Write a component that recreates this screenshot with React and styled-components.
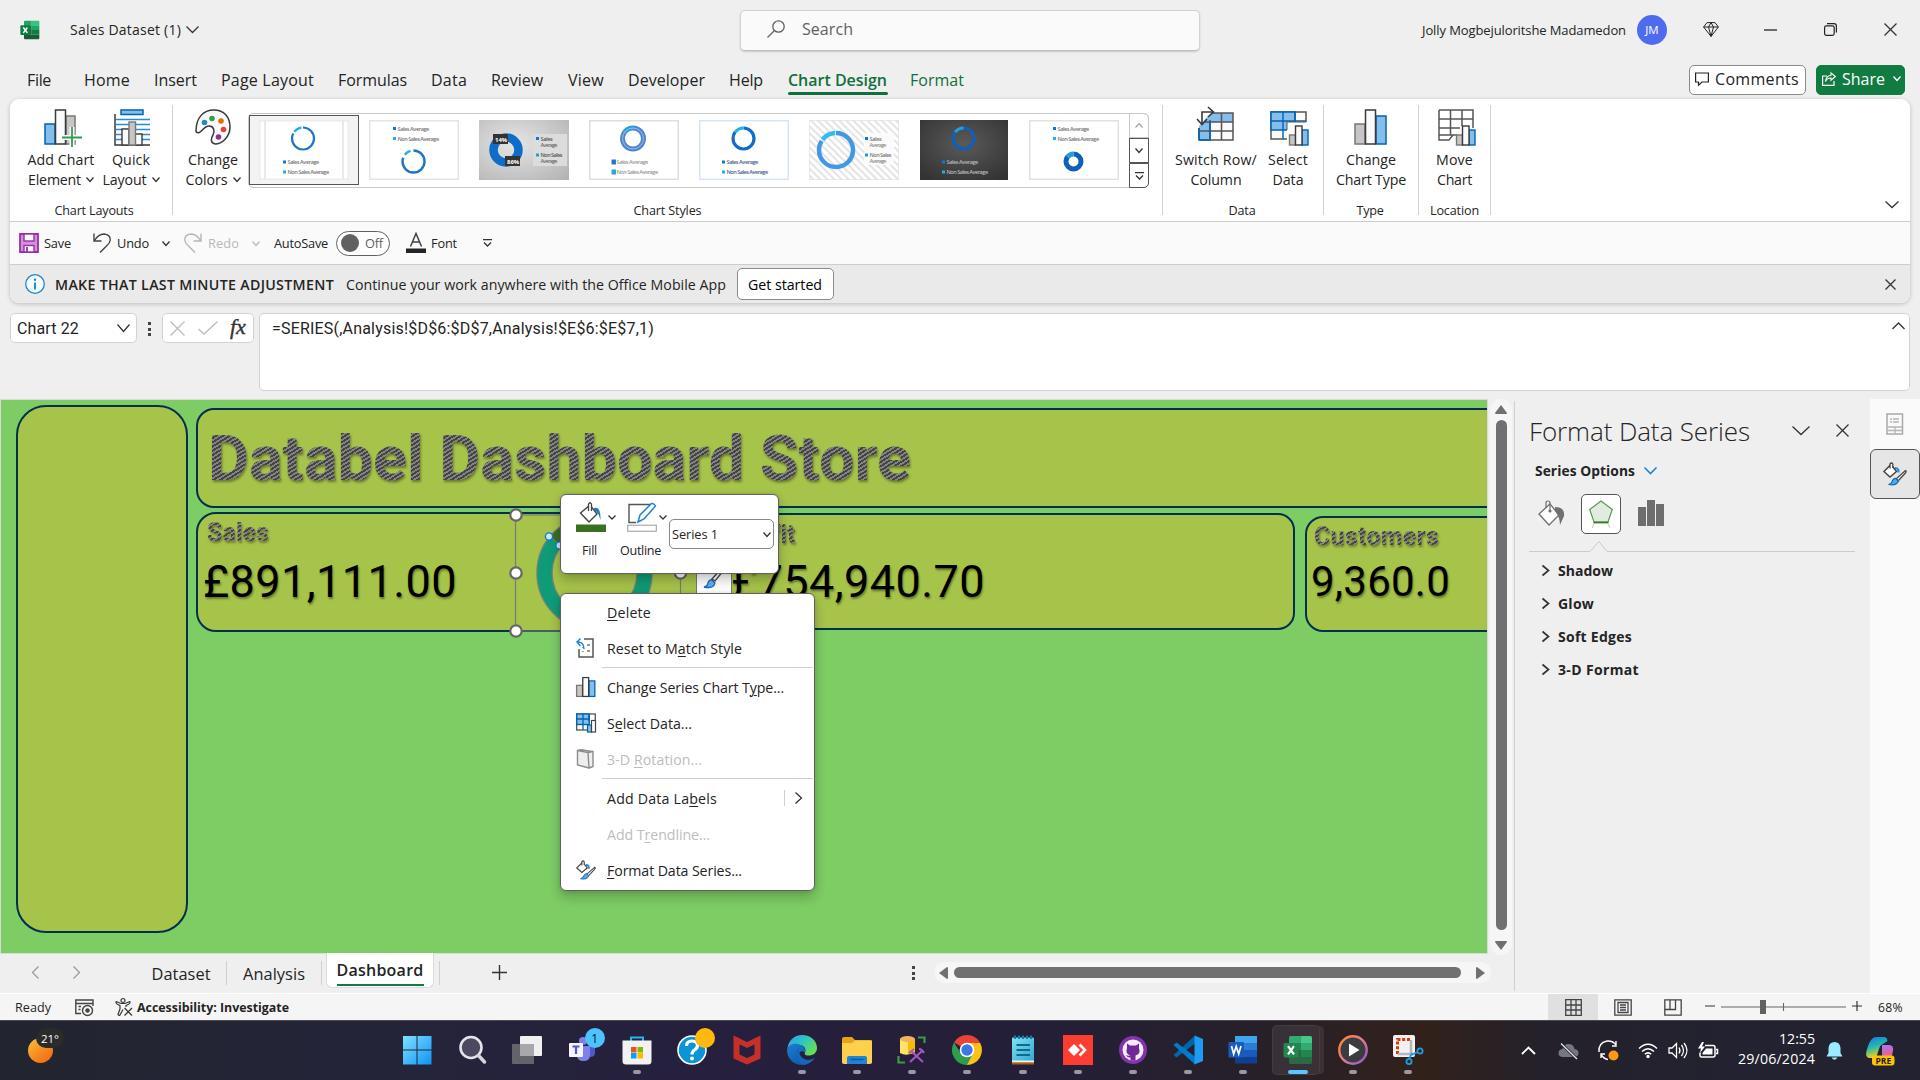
import React, { useLayoutEffect, useRef, useState } from "react";
import styled, { createGlobalStyle, css } from "styled-components";

const Global = createGlobalStyle`
  * { box-sizing: border-box; }
  html, body { margin: 0; padding: 0; overflow: hidden; }
  body { font-family: "Open Sans", "Noto Sans", sans-serif; color: #242424; }
`;

/* ---------- text ---------- */

const Run = styled.span`
  display: inline-block;
  flex: none;
  white-space: nowrap;
  font-family: ${(p) => p.$font || "inherit"};
  font-size: ${(p) => p.$size || 14}px;
  font-weight: ${(p) => p.$weight || 400};
  color: ${(p) => p.$color || "inherit"};
  margin-left: ${(p) => p.$ml || 0}px;
  u { text-decoration: underline; text-underline-offset: 2px; text-decoration-thickness: 1px; }
`;

/* Tracks a caption so that it fills the width reserved for it. */
function Text({ w, children, ...rest }) {
  const ref = useRef(null);
  const [tracking, setTracking] = useState(0);
  useLayoutEffect(() => {
    const el = ref.current;
    if (!w || !el) return;
    el.style.letterSpacing = "0px";
    const natural = el.getBoundingClientRect().width;
    setTracking((w - natural) / Math.max(1, el.textContent.length));
  }, [w]);
  return (
    <Run ref={ref} style={{ letterSpacing: `${tracking}px` }} {...rest}>
      {children}
    </Run>
  );
}

/* ---------- drawings ---------- */

const Svg = styled.svg`
  display: block;
  flex: none;
  width: ${(p) => p.$w}px;
  height: ${(p) => p.$h || p.$w}px;
  margin-left: ${(p) => p.$ml || 0}px;
  overflow: visible;
  fill: none;
`;

const Icon = ({ w, h, ml, children, ...r }) => (
  <Svg $w={w} $h={h || w} $ml={ml} viewBox={`0 0 ${w} ${h || w}`} {...r}>
    {children}
  </Svg>
);

const Chevron = ({ w = 8, h, c = "#333", s = 1.3, ml, dir = "down" }) => {
  const hh = h || w / 2;
  const d = {
    down: `M0.5 0.5 L${w / 2} ${hh - 0.5} L${w - 0.5} 0.5`,
    up: `M0.5 ${hh - 0.5} L${w / 2} 0.5 L${w - 0.5} ${hh - 0.5}`,
    right: `M0.5 0.5 L${w - 0.5} ${hh / 2} L0.5 ${hh - 0.5}`,
    left: `M${w - 0.5} 0.5 L0.5 ${hh / 2} L${w - 0.5} ${hh - 0.5}`,
  }[dir];
  return (
    <Icon w={w} h={hh} ml={ml}>
      <path d={d} stroke={c} strokeWidth={s} />
    </Icon>
  );
};

const Cross = ({ w = 12, c = "#333", ml, s = 1.3 }) => (
  <Icon w={w} ml={ml}>
    <path d={`M0.5 0.5 L${w - 0.5} ${w - 0.5} M${w - 0.5} 0.5 L0.5 ${w - 0.5}`} stroke={c} strokeWidth={s} />
  </Icon>
);

const ExcelLogo = ({ w }) => (
  <Svg $w={w} viewBox="0 0 30 30">
    <path d="M6 2.5 Q6 1 7.5 1 H17.5 V8 H6Z" fill="#21a366" />
    <path d="M17.5 1 H27.5 Q29 1 29 2.5 V8 H17.5Z" fill="#33c481" />
    <rect x="6" y="8" width="11.5" height="7" fill="#107c41" />
    <rect x="17.5" y="8" width="11.5" height="7" fill="#21a366" />
    <rect x="6" y="15" width="11.5" height="7" fill="#185c37" />
    <rect x="17.5" y="15" width="11.5" height="7" fill="#107c41" />
    <path d="M6 22 H29 V27 Q29 29 27.5 29 H7.5 Q6 29 6 27Z" fill="#185c37" />
    <rect x="0.5" y="8" width="15" height="14.5" rx="1.4" fill="#107c41" />
    <path d="M5 11.2 L11 19.3 M11 11.2 L5 19.3" stroke="#fff" strokeWidth="2.2" />
  </Svg>
);

const Bars = ({ a = "#c8c6c4", b = "#83beec", as = "#797774", bs = "#0063b1" }) => (
  <Icon w={34} h={36}>
    <rect x="1" y="15" width="10" height="20" fill={a} stroke={as} strokeWidth="1.5" />
    <rect x="22" y="7" width="10" height="28" fill={b} stroke={bs} strokeWidth="1.5" />
    <rect x="11.5" y="1" width="10" height="34" fill="#fafafa" stroke="#3a3a3a" strokeWidth="1.5" />
  </Icon>
);

const AddElementIcon = () => (
  <Icon w={38} h={38}>
    <rect x="1" y="15" width="10" height="20" fill="#83beec" stroke="#0063b1" strokeWidth="1.5" />
    <rect x="22" y="7" width="9" height="28" fill="#c8c6c4" stroke="#797774" strokeWidth="1.5" />
    <rect x="11.5" y="1" width="10" height="34" fill="#fafafa" stroke="#3a3a3a" strokeWidth="1.5" />
    <path d="M28 18 V38 M18 28.500 H38" stroke="#fff" strokeWidth="5" />
    <path d="M28 18 V38 M18 28.500 H38" stroke="#2f9e4f" strokeWidth="1.8" />
  </Icon>
);

const QuickLayoutIcon = () => (
  <Icon w={36} h={37}>
    <rect x="7" y="1" width="22" height="4.500" fill="#83beec" stroke="#0063b1" strokeWidth="1.5" />
    <path d="M2 10.500H36 M2 15.500H36 M2 20.500H36 M2 25.500H36 M2 30.500H36" stroke="#2b88d8" strokeWidth="1.5" />
    <path d="M1 5 V36 H36" stroke="#3a3a3a" strokeWidth="1.5" />
    <rect x="8" y="20" width="7" height="16" fill="#fafafa" stroke="#3a3a3a" strokeWidth="1.4" />
    <rect x="21" y="25" width="7" height="11" fill="#fafafa" stroke="#3a3a3a" strokeWidth="1.4" />
    <rect x="15" y="13" width="6.500" height="23" fill="#c8c6c4" stroke="#797774" strokeWidth="1.4" />
  </Icon>
);

const PaletteIcon = () => (
  <Icon w={36} h={36}>
    <path
      d="M1 22 C1 9 8 1 19 1 C29 1 35 8 35 18 C35 28 27 35 20 35 C15 34 16 29 18 26 C20 22 19 17 14 17 C9 17 6 24 3.500 23.800 C2 23.700 1 23 1 22Z"
      fill="#fafafa" stroke="#3a3a3a" strokeWidth="1.5"
    />
    <circle cx="9.500" cy="13.500" r="2.800" fill="#1e8bcd" />
    <circle cx="17" cy="9.500" r="2.800" fill="#2f9e4f" />
    <circle cx="26" cy="12" r="2.800" fill="#e07000" />
    <circle cx="28.500" cy="20.500" r="2.800" fill="#e8413c" />
    <circle cx="23.500" cy="28" r="2.800" fill="#8e2fa0" />
  </Icon>
);

const SwitchIcon = () => (
  <Icon w={37} h={37}>
    <path d="M12 7 H36 V34 H2 V20Z" fill="#fafafa" />
    <path d="M14 7 H36 V16 H13 V34 H2 V20Z" fill="#83beec" />
    <path d="M14 7 H36 V34 H2 V22 M2 25 H36 M8 16 H36 M13 14 V34 M24.500 7 V34" stroke="#555" strokeWidth="1.5" />
    <path d="M2 34 V22 M2 34 H13 V16" stroke="#0063b1" strokeWidth="1.5" />
    <path d="M5 18 V6 H16" stroke="#3a3a3a" strokeWidth="1.6" />
    <path d="M0 13 L5 18.500 L10 13 M11 1 L16.500 6 L11 11" stroke="#3a3a3a" strokeWidth="1.6" />
  </Icon>
);

const SelectDataIcon = ({ w = 39, h = 37 }) => (
  <Svg $w={w} $h={h} viewBox="0 0 39 37" preserveAspectRatio="none">
    <rect x="1" y="3" width="35" height="27" fill="#fafafa" stroke="#555" strokeWidth="1.5" />
    <rect x="1" y="3" width="24" height="18" fill="#83beec" stroke="#0063b1" strokeWidth="1.5" />
    <path d="M1 12 H36 M13 3 V30 M25 3 V30" stroke="#0063b1" strokeWidth="1.4" />
    <rect x="17" y="13" width="24" height="26" fill="#fff" />
    <path d="M17 21 V13 H36" stroke="#555" strokeWidth="1" />
    <rect x="19.500" y="26" width="6" height="10" fill="#c8c6c4" stroke="#797774" strokeWidth="1.4" />
    <rect x="32" y="21" width="6" height="15" fill="#83beec" stroke="#0063b1" strokeWidth="1.4" />
    <rect x="25.500" y="17" width="6.500" height="19" fill="#fafafa" stroke="#3a3a3a" strokeWidth="1.4" />
  </Svg>
);

const MoveChartIcon = () => (
  <Icon w={38} h={37}>
    <path d="M1 1 H35 V19 M1 1 V31 H11 L15 26 H19 M1 26 H15 M1 10 H35 M1 19 H22 M12.500 1 V26 M24 1 V17" stroke="#555" strokeWidth="1.5" />
    <rect x="18.500" y="26" width="6" height="10" fill="#c8c6c4" stroke="#797774" strokeWidth="1.4" />
    <rect x="31" y="21" width="6" height="15" fill="#83beec" stroke="#0063b1" strokeWidth="1.4" />
    <rect x="24.500" y="17" width="6.500" height="19" fill="#fafafa" stroke="#3a3a3a" strokeWidth="1.4" />
  </Icon>
);

const BucketBrush = ({ w = 22, ml }) => (
  <Svg $w={w} $ml={ml} viewBox="0 0 24 24">
    <path d="M1 9.500 L8 2.500 L13.500 9.500 L7 15Z" fill="#fff" stroke="#444" strokeWidth="1.5" />
    <path d="M7 6.500 V2 Q8.500 0 9.800 2 V6" fill="#fff" stroke="#444" strokeWidth="1.3" />
    <path d="M12 6 Q16 6 15.500 10.500" stroke="#2b88d8" strokeWidth="2.2" />
    <path d="M22.500 8.500 Q24 9.500 22 11.500 L15 19 L13 17Z" fill="#fff" stroke="#444" strokeWidth="1.3" />
    <path d="M13 16.500 L15.500 19 Q13.500 24 5.500 22.500 Q9 21.500 9.500 18.500 Q11 16 13 16.500Z" fill="#5aa7e0" stroke="#0f6cbd" strokeWidth="1.2" />
  </Svg>
);

/* ---------- frame ---------- */

const Screen = styled.div`
  width: 1920px;
  height: 1080px;
  display: flex;
  flex-direction: column;
  background: #efefef;
  overflow: hidden;
`;
const Defs = styled.svg`
  position: absolute;
  width: 0;
  height: 0;
`;

const TitleBar = styled.header`
  height: 61px;
  display: flex;
  align-items: flex-start;
`;
const TitlePart = styled.div`
  display: flex;
  align-items: center;
  height: 59px;
  width: ${(p) => p.$w}px;
  padding-left: ${(p) => p.$pl || 0}px;
`;
const SearchField = styled.div`
  width: 460px;
  height: 41px;
  margin-top: 10px;
  display: flex;
  align-items: center;
  padding: 0 0 4px 26px;
  background: #fafafa;
  border: 1px solid #d2d2d2;
  border-bottom-color: #bdbdbd;
  border-radius: 5px;
  box-shadow: 0 1px 2px rgba(0, 0, 0, 0.16);
`;
const Avatar = styled.div`
  flex: none;
  width: 30px;
  height: 30px;
  margin-left: 11px;
  border-radius: 50%;
  background: #4f6bed;
  display: grid;
  place-items: center;
`;

const TabStrip = styled.nav`
  height: 38px;
  display: flex;
  align-items: center;
  padding-left: 27px;
`;
const RibbonTab = styled.div`
  position: relative;
  height: 38px;
  display: flex;
  align-items: center;
  padding-bottom: 1px;
  margin-right: ${(p) => p.$mr ?? 24}px;
  color: ${(p) => (p.$green ? "#0f703b" : "#242424")};
  ${(p) =>
    p.$active &&
    css`
      &::after {
        content: "";
        position: absolute;
        left: 0;
        right: -1px;
        bottom: 4px;
        height: 3px;
        border-radius: 2px;
        background: #0f703b;
      }
    `}
`;
const TabButton = styled.button`
  font-family: inherit;
  flex: none;
  width: ${(p) => p.$w}px;
  height: 30px;
  display: flex;
  align-items: center;
  padding: 0 0 3px 5px;
  border-radius: 5px;
  border: 1px solid ${(p) => (p.$primary ? "#107c41" : "#8a8a8a")};
  background: ${(p) => (p.$primary ? "#107c41" : "#fff")};
  color: ${(p) => (p.$primary ? "#fff" : "#242424")};
  margin-left: ${(p) => p.$ml}px;
`;

/* ---------- ribbon ---------- */

const RibbonCard = styled.section`
  flex: none;
  height: 204px;
  margin: 0 10px;
  display: flex;
  flex-direction: column;
  border-radius: 9px;
  background: #fff;
  box-shadow: 0 1px 4px rgba(0, 0, 0, 0.22);
`;
const Ribbon = styled.div`
  height: 123px;
  display: flex;
  border-bottom: 1px solid #cdcdcd;
`;
const Group = styled.div`
  flex: none;
  width: ${(p) => p.$w}px;
  display: flex;
  flex-direction: column;
`;
const GroupTools = styled.div`
  height: 101px;
  display: flex;
`;
const GroupCaption = styled.div`
  height: 20px;
  display: flex;
  align-items: center;
  justify-content: center;
  margin-left: ${(p) => p.$shift || 0}px;
`;
const Divider = styled.div`
  flex: none;
  width: 1px;
  height: 110px;
  margin-top: 6px;
  background: #d0d0d0;
`;
const Tool = styled.div`
  flex: none;
  width: ${(p) => p.$w}px;
  margin-left: ${(p) => p.$ml || 0}px;
  padding-top: ${(p) => p.$top || 10}px;
  display: flex;
  flex-direction: column;
  align-items: center;
`;
const ToolIcon = styled.div`
  height: ${(p) => 50 - (p.$top || 10)}px;
  transform: translateX(${(p) => p.$dx || 0}px);
`;
const ToolLine = styled.div`
  height: 20px;
  display: flex;
  align-items: center;
`;

const Gallery = styled.div`
  flex: none;
  width: 901px;
  height: 75px;
  margin: 14px 0 0 4px;
  display: flex;
  border: 1px solid #c8c8c8;
  border-radius: 5px;
`;
const Styles = styled.div`
  flex: 1;
  display: flex;
`;
const StyleCell = styled.div`
  width: 110px;
  height: 70px;
  margin-top: 1px;
  display: grid;
  place-items: center;
  border: 1px solid ${(p) => (p.$selected ? "#555" : "transparent")};
  background: ${(p) => (p.$selected ? "#f3f3f3" : "transparent")};
`;
const Thumb = styled.svg`
  display: block;
  width: 90px;
  height: 60px;
`;
const GallerySteps = styled.div`
  width: 20px;
  margin: -1px -1px -1px 0;
  display: flex;
  flex-direction: column;
`;
const Step = styled.div`
  flex: 1;
  display: grid;
  place-items: center;
  align-content: center;
  border: 1px solid ${(p) => (p.$dim ? "#c8c8c8" : "#555")};
  border-radius: ${(p) => p.$r || 0};
`;
const Collapse = styled.div`
  flex: 1;
  display: flex;
  justify-content: flex-end;
  align-items: flex-end;
  padding: 0 11px 13px 0;
`;

function Legend({ x, y, text, color = "#777", dot = "#0f78d4" }) {
  return (
    <g>
      <rect x={x} y={y - 3.5} width="3" height="3" fill={dot} />
      <text x={x + 4.5} y={y} fontSize="5.600" fontFamily="Open Sans" fontWeight="600" fill={color} textLength={text.length * 2.45}>
        {text}
      </text>
    </g>
  );
}
function Ring({ x, y, r, s, c = "#1f74c9", c2 = "#1fb0e8", gap = 0.06 }) {
  const len = 2 * Math.PI * r;
  return (
    <g transform={`rotate(-90 ${x} ${y})`}>
      <circle cx={x} cy={y} r={r} stroke={c} strokeWidth={s} fill="none" strokeDasharray={`${len * (0.85 - gap / 2)} ${len}`} />
      <circle cx={x} cy={y} r={r} stroke={c2} strokeWidth={s} fill="none" strokeDasharray={`${len * (0.15 - gap / 2)} ${len}`} strokeDashoffset={-len * 0.85} />
    </g>
  );
}
const SA = "Sales Average";
const NSA = "Non Sales Average";
const frame = (stroke, fill = "#fff") => <rect x="0.75" y="0.75" width="88.500" height="58.500" fill={fill} stroke={stroke} strokeWidth="1.5" />;
const thumbs = [
  <>
    <rect width="90" height="60" fill="#fff" />
    <path d="M6 0V60 M84 0V60" stroke="#e2e2e2" strokeWidth="1.5" />
    {frame("#ececec", "none")}
    <Ring x={44} y={18.5} r={11} s={2.2} />
    <Legend x={24} y={44} text={SA} />
    <Legend x={24} y={54} text={NSA} dot="#1fb0e8" />
  </>,
  <>
    {frame("#e4e4e4")}
    <Legend x={24} y={10.5} text={SA} />
    <Legend x={24} y={20.5} text={NSA} dot="#1fb0e8" />
    <Ring x={44.5} y={41.5} r={11} s={2.4} gap={0.1} />
  </>,
  <>
    <rect width="90" height="60" fill="url(#silver)" />
    <rect x="54" y="14" width="34" height="32" fill="#dcdcdc" />
    <Ring x={27} y={30} r={12.5} s={8.5} c="#0f6cc8" c2="#0f6cc8" gap={0} />
    <rect x="14" y="14" width="15" height="10" fill="#333" />
    <rect x="26" y="36" width="15" height="10" fill="#333" />
    <text x="16" y="21.500" fontSize="6" fontWeight="700" fill="#fff" fontFamily="Open Sans">14%</text>
    <text x="28" y="43.500" fontSize="6" fontWeight="700" fill="#fff" fontFamily="Open Sans">86%</text>
    <Legend x={57} y={20.5} text="Sales" color="#555" />
    <text x="61.500" y="26.500" fontSize="5.600" fill="#555" fontFamily="Open Sans" textLength="17">Average</text>
    <Legend x={57} y={37} text="Non Sales" color="#555" dot="#1fa0d8" />
    <text x="61.500" y="43" fontSize="5.600" fill="#555" fontFamily="Open Sans" textLength="17">Average</text>
  </>,
  <>
    {frame("#dedede")}
    <Ring x={44} y={18.5} r={10.5} s={5} c="#4f86cf" c2="#2d9fd4" gap={0} />
    <circle cx="44" cy="18.500" r="10.500" stroke="#a9c8ec" strokeWidth="0.8" />
    <rect x="22.500" y="39.500" width="4.500" height="5" fill="#3d78c8" />
    <rect x="22.500" y="49.500" width="4.500" height="5" fill="#2d9fd4" />
    <Legend x={23} y={44} text={SA} color="#999" />
    <Legend x={23} y={54} text={NSA} color="#999" dot="#1fb0e8" />
  </>,
  <>
    {frame("#d5e6f7")}
    <Ring x={44.5} y={18.5} r={10.5} s={3.2} c="#0f6cc8" c2="#1fb0e8" gap={0} />
    <Legend x={23} y={44} text={SA} color="#44618c" />
    <Legend x={23} y={54} text={NSA} color="#44618c" dot="#1fb0e8" />
  </>,
  <>
    <rect width="90" height="60" fill="url(#hatch)" stroke="#e3e3e3" strokeWidth="1.5" />
    <rect x="55" y="13" width="30" height="32" fill="#fbfbfb" />
    <Ring x={27} y={30} r={17} s={4.5} c="#4398e6" c2="#2fbdf0" gap={0.03} />
    <Legend x={56} y={20.5} text="Sales" color="#777" />
    <text x="60.500" y="26.500" fontSize="5.600" fill="#777" fontFamily="Open Sans" textLength="17">Average</text>
    <Legend x={56} y={37} text="Non Sales" color="#777" dot="#1fa0d8" />
    <text x="60.500" y="43" fontSize="5.600" fill="#777" fontFamily="Open Sans" textLength="17">Average</text>
  </>,
  <>
    <rect x="1" width="88" height="60" fill="url(#dark)" />
    <Ring x={44.5} y={18.5} r={10.5} s={3.2} c="#1060b8" c2="#1fa0e0" gap={0} />
    <Legend x={23} y={44} text={SA} color="#b8b8b8" />
    <Legend x={23} y={54} text={NSA} color="#b8b8b8" dot="#1fb0e8" />
  </>,
  <>
    {frame("#e2e2e2")}
    <Legend x={24} y={10.5} text={SA} />
    <Legend x={24} y={20.5} text={NSA} dot="#1fb0e8" />
    <Ring x={44.5} y={41.5} r={7.5} s={5} c="#1060b8" c2="#1fa0d0" gap={0} />
  </>,
];

/* ---------- quick access, message, formula ---------- */

const QuickAccess = styled.div`
  height: 43px;
  display: flex;
  align-items: center;
  padding-left: 9px;
  background: #fafafa;
  border-bottom: 1px solid #cdcdcd;
`;
const Toggle = styled.div`
  flex: none;
  width: 54px;
  height: 25px;
  margin-left: 8px;
  padding-left: 4px;
  display: flex;
  align-items: center;
  border: 1px solid #616161;
  border-radius: 13px;
  background: #fff;
  &::before {
    content: "";
    width: 18px;
    height: 18px;
    border-radius: 50%;
    background: #616161;
  }
`;
const MessageBar = styled.div`
  height: 38px;
  display: flex;
  align-items: center;
  padding: 0 14px 0 15px;
  background: #eaeaea;
  border-radius: 0 0 9px 9px;
`;
const MessageButton = styled.button`
  font-family: inherit;
  width: 97px;
  height: 32px;
  margin-left: 11px;
  padding: 0 0 0 10px;
  text-align: left;
  border: 1px solid #8a8a8a;
  border-radius: 5px;
  background: #fff;
`;
const Push = styled.div`
  flex: 1;
`;

const FormulaRow = styled.div`
  flex: none;
  height: 96px;
  padding: 10px 10px 0;
  display: flex;
  align-items: flex-start;
`;
const InputBox = styled.div`
  flex: none;
  width: ${(p) => p.$w}px;
  height: ${(p) => p.$h || 30}px;
  margin-left: ${(p) => p.$ml || 0}px;
  padding: ${(p) => p.$pad || "0 6px"};
  display: flex;
  align-items: ${(p) => (p.$h ? "flex-start" : "center")};
  background: #fff;
  border: 1px solid #d2d2d2;
  border-radius: 5px;
`;
const Fx = styled.span`
  font: italic 400 22px/22px "Liberation Serif", serif;
  -webkit-text-stroke: 0.4px #333;
  color: #333;
  margin: -2px 0 0 12px;
`;
const Dots = styled.div`
  width: 3px;
  height: 14px;
  margin-left: ${(p) => p.$ml}px;
  margin-top: ${(p) => p.$mt || 0}px;
  background: repeating-linear-gradient(#444 0 3px, transparent 3px 5.5px);
`;

/* ---------- workbook ---------- */

const Main = styled.main`
  flex: none;
  height: 594px;
  display: flex;
`;
const Workbook = styled.div`
  width: 1514px;
  display: flex;
  flex-direction: column;
`;
const SheetRow = styled.div`
  height: 554px;
  display: flex;
`;
const Sheet = styled.div`
  position: relative;
  width: 1488px;
  height: 555px;
  background: #7dcc64;
  border: 1px solid #dadada;
  overflow: hidden;
`;
const Shape = styled.div`
  position: absolute;
  left: ${(p) => p.$x}px;
  top: ${(p) => p.$y}px;
  width: ${(p) => p.$w}px;
  height: ${(p) => p.$h}px;
  border: 2px solid #032f50;
  border-radius: ${(p) => p.$r}px;
  background: #a6c34a;
`;
const ShapeText = styled.div`
  position: absolute;
  left: ${(p) => p.$x}px;
  top: ${(p) => p.$y}px;
  line-height: 1;
  white-space: nowrap;
`;
const Hatched = styled(ShapeText)`
  filter: drop-shadow(1px 2px 1px rgba(50, 50, 20, 0.5));
  span {
    color: transparent;
    background: repeating-linear-gradient(148deg, #444 0 1.9px, #848484 1.9px 3.6px);
    background-clip: text;
    -webkit-background-clip: text;
  }
`;
const Amount = styled(ShapeText)`
  color: #000;
  text-shadow: 1px 2px 2px rgba(30, 40, 0, 0.45);
`;
const ChartObject = styled.svg`
  position: absolute;
  left: 500px;
  top: 100px;
  width: 200px;
  height: 150px;
`;
const StyleFlyout = styled.div`
  position: absolute;
  left: 695px;
  top: 162px;
  width: 36px;
  height: 36px;
  background: #fff;
  border: 1px solid #777;
  display: grid;
  place-items: center;
`;

const floating = css`
  position: absolute;
  background: #fff;
  border: 1px solid #616161;
  border-radius: 6px;
  box-shadow: 0 6px 12px rgba(0, 0, 0, 0.22), 0 0 4px rgba(0, 0, 0, 0.12);
`;
const MiniToolbar = styled.div`
  ${floating}
  left: 559px;
  top: 94px;
  width: 219px;
  height: 80px;
  display: flex;
  padding-left: 15px;
`;
const MiniTool = styled.div`
  display: flex;
  flex-direction: column;
  width: ${(p) => p.$w}px;
  padding-top: 7px;
`;
const MiniTop = styled.div`
  height: 33px;
  display: flex;
`;
const MiniLabel = styled.div`
  height: 30px;
  display: flex;
  align-items: center;
  padding-left: ${(p) => p.$pl || 0}px;
`;
const SeriesSelect = styled.div`
  width: 105px;
  height: 30px;
  margin-top: 24px;
  padding: 0 2px;
  display: flex;
  align-items: center;
  justify-content: space-between;
  border: 1px solid #8a8a8a;
  border-radius: 5px;
`;
const ContextMenu = styled.div`
  ${floating}
  left: 559px;
  top: 193px;
  width: 255px;
  height: 298px;
  padding: 0 0 4px;
`;
const MenuItem = styled.div`
  height: 36px;
  display: flex;
  align-items: center;
  padding-right: ${(p) => p.$pr || 0}px;
  color: ${(p) => (p.$dim ? "#bdbdbd" : "#242424")};
`;
const MenuIcon = styled.div`
  width: 31px;
  margin-left: 15px;
  height: 22px;
  display: flex;
  align-items: center;
`;
const MenuRule = styled.div`
  height: 1px;
  margin: 1px 1px 1px 41px;
  background: #cfcfcf;
`;
const SubDivider = styled.div`
  width: 1px;
  height: 16px;
  margin-left: auto;
  background: #cfcfcf;
`;

const VScroll = styled.div`
  width: 22px;
  height: 556px;
  margin: 0 0 -2px 2px;
  padding: 6px 0 5px;
  border-radius: 11px;
  background: #f6f6f6;
  display: flex;
  flex-direction: column;
  align-items: center;
`;
const VThumb = styled.div`
  width: 11px;
  height: 510px;
  margin: 6px 0 11px;
  border-radius: 6px;
  background: #707070;
`;
const SheetTabs = styled.div`
  height: 40px;
  display: flex;
  align-items: flex-start;
`;
const SheetTab = styled.div`
  position: relative;
  height: ${(p) => (p.$active ? 35 : 40)}px;
  display: flex;
  align-items: center;
  justify-content: center;
  width: ${(p) => p.$w}px;
  margin-left: ${(p) => p.$ml || 0}px;
  ${(p) =>
    p.$active &&
    css`
      background: #fff;
      border: 1px solid #dcdcdc;
      border-top: 0;
      border-radius: 0 0 6px 6px;
      span {
        margin-top: 2px;
        border-bottom: 2px solid #107c41;
        line-height: 27px;
      }
    `}
`;
const TabDivider = styled.div`
  width: 1px;
  height: 24px;
  margin: 8px 0 0 ${(p) => p.$ml || 0}px;
  background: #cfcfcf;
`;
const NavCell = styled.div`
  height: 38px;
  display: flex;
  align-items: center;
  padding-left: ${(p) => p.$pl || 0}px;
  width: ${(p) => p.$w}px;
`;
const HScroll = styled.div`
  width: 557px;
  height: 21px;
  margin: 9px 0 0 19px;
  padding: 0 6px 0 5px;
  display: flex;
  align-items: center;
  border-radius: 11px;
  background: #f6f6f6;
`;
const HThumb = styled.div`
  width: 507px;
  height: 11px;
  margin: 0 15px 0 6px;
  border-radius: 6px;
  background: #707070;
`;

/* ---------- format pane ---------- */

const Pane = styled.aside`
  width: 356px;
  height: 590px;
  margin-top: 2px;
  border-left: 1px solid #cfcfcf;
  display: flex;
  flex-direction: column;
`;
const PaneTitle = styled.div`
  height: 60px;
  display: flex;
  align-items: center;
  padding-left: 14px;
  padding-bottom: 1px;
`;
const PaneHeading = styled.div`
  height: 18px;
  display: flex;
  align-items: center;
  padding-left: 20px;
`;
const PaneIcons = styled.div`
  height: 55px;
  display: flex;
  align-items: flex-end;
  padding-left: 23px;
`;
const PaneTab = styled.div`
  width: 40px;
  height: 40px;
  margin: 0 17px 0 16px;
  border: 1px solid #555;
  border-radius: 5px;
  background: #fff;
  display: grid;
  place-items: center;
`;
const PaneRow = styled.div`
  height: 33px;
  display: flex;
  align-items: center;
  padding-left: 27px;
`;
const PaneStrip = styled.div`
  width: 50px;
  height: 594px;
  padding-top: 14px;
  background: #fafafa;
  display: flex;
  flex-direction: column;
  align-items: center;
`;
const StripActive = styled.div`
  width: 50px;
  height: 50px;
  margin-top: 14px;
  border: 1px solid #555;
  border-radius: 6px;
  background: #e6e6e6;
  display: grid;
  place-items: center;
`;

/* ---------- status bar ---------- */

const StatusBar = styled.footer`
  flex: none;
  height: 27px;
  display: flex;
  align-items: center;
  padding: 1px 17px 1px 15px;
  background: #f5f5f5;
  border-top: 1px solid #fff;
`;
const ViewButton = styled.div`
  width: 50px;
  height: 27px;
  margin: -2px 0;
  display: grid;
  place-items: center;
  background: ${(p) => (p.$active ? "#e0e0e0" : "transparent")};
`;

/* ---------- taskbar ---------- */

const Taskbar = styled.div`
  flex: none;
  height: 60px;
  display: flex;
  border-top: 1px solid #4a4a50;
  background: linear-gradient(90deg, #22252f 0%, #24243a 22%, #261f3d 38%, #241f38 54%, #272029 66%, #32211b 74%, #25212a 80%, #222230 90%, #222231 100%);
`;
const Weather = styled.div`
  position: relative;
  width: 28px;
  height: 25px;
  margin: 17px 0 0 28px;
  &::before {
    content: "";
    display: block;
    width: 25px;
    height: 25px;
    border-radius: 50%;
    background: linear-gradient(140deg, #f8c13a, #f58a1f 55%, #f0650f);
  }
`;
const WeatherBadge = styled.div`
  position: absolute;
  left: 8px;
  top: -10px;
  height: 20px;
  width: 28px;
  border-radius: 10px;
  background: #2b2b2b;
  color: #fff;
  display: grid;
  place-items: center;
`;
const Apps = styled.div`
  display: flex;
  margin-left: 333.5px;
`;
const AppSlot = styled.div`
  position: relative;
  width: 55.06px;
  height: 59px;
  padding-top: 14px;
  display: flex;
  flex-direction: column;
  align-items: center;
  &::after {
    content: "";
    width: ${(p) => (p.$state === "active" ? 20 : 8)}px;
    height: 4px;
    margin-top: 5px;
    border-radius: 2px;
    background: ${(p) => (p.$state === "active" ? "#4cc2ff" : p.$state === "open" ? "#9a98a2" : "transparent")};
  }
  &::before {
    content: "";
    position: absolute;
    inset: 4px 5px 5px 2px;
    border-radius: 5px;
    background: rgba(255, 255, 255, ${(p) => (p.$state === "active" ? 0.08 : 0)});
    box-shadow: ${(p) => (p.$state === "active" ? "5px 0 0 -1px rgba(255,255,255,0.08), inset 0 0 0 1px rgba(255,255,255,0.06)" : "none")};
  }
`;
const CountBadge = styled.div`
  position: absolute;
  top: 7px;
  right: 5px;
  width: 20px;
  height: 20px;
  border-radius: 50%;
  background: ${(p) => p.$c};
  color: #111;
  display: grid;
  place-items: center;
`;
const Tray = styled.div`
  display: flex;
  align-items: center;
  margin-left: auto;
  padding-right: 25px;
`;
const Clock = styled.div`
  width: 97px;
  margin-top: -3px;
  display: flex;
  flex-direction: column;
  align-items: flex-end;
  line-height: 20px;
  color: #fff;
`;

const apps = [
  { id: "start", art: (
    <Icon w={30}>
      <defs><linearGradient id="win" x1="0" y1="0" x2="1" y2="1"><stop stopColor="#7fe0ff" /><stop offset="1" stopColor="#0f93f5" /></linearGradient></defs>
      <path d="M1 1H14.500V14.500H1Z M15.500 1H29.500V14.500H15.500Z M1 15.500H14.500V29.500H1Z M15.500 15.500H29.500V29.500H15.500Z" fill="url(#win)" />
    </Icon>) },
  { id: "search", art: (
    <Icon w={30}>
      <circle cx="14" cy="12.500" r="10.500" fill="#4c4860" stroke="#e4e4ea" strokeWidth="2.600" />
      <path d="M21.500 20.500 L27.500 27" stroke="#d5d5dc" strokeWidth="3.500" strokeLinecap="round" />
    </Icon>) },
  { id: "views", art: (
    <Icon w={30}>
      <rect x="8" y="1" width="22" height="20" rx="1" fill="#f0f0f0" />
      <rect x="0" y="9" width="22" height="20" rx="1" fill="#63636a" />
      <rect x="8" y="9" width="14" height="12" fill="#a8a8ac" />
    </Icon>) },
  { id: "teams", badge: "1", art: (
    <Icon w={30}>
      <circle cx="16" cy="6" r="4" fill="#7b83eb" />
      <path d="M10 11H23V20Q23 26 16.500 26Q10 26 10 20Z" fill="#7b83eb" />
      <path d="M23 11H28V18Q28 22 23 22Z" fill="#5059c9" />
      <rect x="2" y="8" width="14" height="14" rx="1" fill="#f4f5ff" />
      <path d="M5.500 11.500H12.500 M9 11.500V19" stroke="#5059c9" strokeWidth="2.200" />
    </Icon>) },
  { id: "store", state: "open", art: (
    <Icon w={30}>
      <path d="M9 6V2.500H21V6" stroke="#27b4f0" strokeWidth="2" />
      <path d="M0.500 5.500H29.500V26Q29.500 29.500 26 29.500H4Q0.500 29.500 0.500 26Z" fill="#f2f2f2" />
      <rect x="9" y="12" width="5.500" height="5.500" fill="#f25022" /><rect x="15.500" y="12" width="5.500" height="5.500" fill="#7fba00" />
      <rect x="9" y="18" width="5.500" height="5.500" fill="#00a4ef" /><rect x="15.500" y="18" width="5.500" height="5.500" fill="#ffb900" />
    </Icon>) },
  { id: "assist", dot: true, art: (
    <Icon w={30}>
      <circle cx="15" cy="15" r="14" fill="#0a95d8" stroke="#fff" strokeWidth="1.600" />
      <path d="M9.500 11Q9.500 6 15 6Q20.500 6 20.500 10.500Q20.500 13 17.500 15Q15 16.500 15 19.500" stroke="#fff" strokeWidth="3.200" />
      <circle cx="15" cy="23.500" r="2" fill="#fff" />
    </Icon>) },
  { id: "shield", art: (
    <Icon w={30}>
      <path d="M1.500 0.500L15 7L28.500 0.500V23.500L15 29.500L1.500 23.500Z M7.500 9.500V19.500L15 23L22.500 19.500V9.500L15 13Z" fill="#c6302b" fillRule="evenodd" />
    </Icon>) },
  { id: "edge", state: "open", art: (
    <Icon w={30}>
      <defs>
        <linearGradient id="eg" x1="0" y1="0" x2="1" y2="0.600"><stop stopColor="#2f9fe8" /><stop offset="0.5" stopColor="#2cc3c9" /><stop offset="1" stopColor="#66df54" /></linearGradient>
        <linearGradient id="eb" x1="0" y1="0" x2="0.600" y2="1"><stop stopColor="#1b7fd0" /><stop offset="1" stopColor="#0c59a4" /></linearGradient>
      </defs>
      <path d="M0.500 14C1 6 7 0 15 0C24 0 30 6 30 13C30 18 26 20.500 21.500 20.500C18 20.500 17 19 18 17.500C19.500 14 17 10 12.500 10C7 10 1 13 0.500 14Z" fill="url(#eg)" />
      <path d="M0 15C1 9.500 7 8 11 9C16 10 19 14 18 17.500C14 14 10 19 12 23C15 27 22 26.500 27 23.500C25 27 20.500 30 15 30C6.500 30 0 23.500 0 15Z" fill="url(#eb)" />
      <path d="M12 13C7 17 8 27 17 29.800C22 29 26 26 27.500 23C20 27.500 11 23.500 12 13Z" fill="#1467bd" />
    </Icon>) },
  { id: "files", state: "open", art: (
    <Icon w={30}>
      <path d="M0 4Q0 2 2 2H10L13 5H28Q30 5 30 7V28H0Z" fill="#e8a317" />
      <path d="M0 8H10L13 5.500H30V27Q30 29 28 29H2Q0 29 0 27Z" fill="#ffd04c" />
      <path d="M5 29V23Q5 21 7 21H23Q25 21 25 23V29Z" fill="#1f84d4" /><path d="M8.500 24.500H21.500" stroke="#0f5ba0" strokeWidth="1.500" />
    </Icon>) },
  { id: "sqltools", state: "open", art: (
    <Icon w={30}>
      <path d="M3 4V18Q8 21 13 19V4Z" fill="#ffe36a" /><path d="M11 4V19Q17 19 18 17V4Z" fill="#f5bd00" />
      <ellipse cx="10.500" cy="4" rx="7.500" ry="3" fill="#f2b35c" />
      <path d="M21 2.500H27.500V8" stroke="#3c9a46" strokeWidth="2.200" /><path d="M1.500 21V27.500H8" stroke="#3c9a46" strokeWidth="2.200" />
      <path d="M13 27L25 16 M14 16L26 27 M12 18L17 14 M22 14Q25 14 27 18" stroke="#a558c9" strokeWidth="2" />
    </Icon>) },
  { id: "chrome", state: "open", art: (
    <Icon w={30}>
      <path d="M15 15L2 7.500A15 15 0 0 1 28 7.500Z" fill="#ea4335" />
      <path d="M15 15V8L28.200 8A15 15 0 0 1 15 30Z" fill="#fbc116" />
      <path d="M15 15L9 18.500L2 7.500A15 15 0 0 0 15 30L21 18.500Z" fill="#2f9e4c" />
      <circle cx="15" cy="15" r="7.300" fill="#fff" /><circle cx="15" cy="15" r="5.700" fill="#3b78e7" />
    </Icon>) },
  { id: "notepad", state: "open", art: (
    <Icon w={30}>
      <defs><linearGradient id="np" x1="0" y1="0" x2="1" y2="1"><stop stopColor="#7fe3f2" /><stop offset="1" stopColor="#35a6cf" /></linearGradient></defs>
      <rect x="4" y="26" width="22" height="3.500" fill="#b65c1e" />
      <rect x="4" y="2.500" width="22" height="24" rx="1" fill="url(#np)" /><rect x="4" y="25.500" width="22" height="1.800" fill="#e9f6fa" />
      <path d="M8.500 10H22 M8.500 15H22 M8.500 20H22" stroke="#0d6a92" strokeWidth="1.800" />
      <path d="M7 0.500V4 M11 0.500V4 M15 0.500V4 M19 0.500V4 M23 0.500V4" stroke="#0f7fa8" strokeWidth="2" />
    </Icon>) },
  { id: "anydesk", state: "open", art: (
    <Icon w={30}>
      <rect width="30" height="30" fill="#fb3d32" />
      <path d="M5 15L11 9L17 15L11 21Z" fill="#fff" /><path d="M16.500 9.500L22 15L16.500 20.500" stroke="#fff" strokeWidth="2.600" />
    </Icon>) },
  { id: "github", state: "open", art: (
    <Icon w={30}>
      <circle cx="15" cy="15" r="14" fill="#8334ad" />
      <circle cx="15" cy="15" r="10.500" fill="#f5ecfa" />
      <path d="M9 8.500L12 10.500H18L21 8.500V13Q23 19 17.500 20.500V25.500H12.500V22.500Q9.500 23 8 20Q10 21 12.500 20.500Q7 19 9 13Z" fill="#702897" />
    </Icon>) },
  { id: "code", state: "open", art: (
    <Icon w={30}>
      <path d="M22 0.500L0.500 20L3.500 22.500L22 8.500Z" fill="#0065a9" /><path d="M22 29.500L0.500 10L3.500 7.500L22 21.500Z" fill="#007acc" />
      <path d="M21.500 0.500L30 4V26L21.500 29.500Z" fill="#1f9cf0" />
    </Icon>) },
  { id: "word", state: "open", art: (
    <Icon w={30}>
      <path d="M7 1H29V8H7Z" fill="#41a5ee" /><path d="M7 8H29V15H7Z" fill="#2b7cd3" /><path d="M7 15H29V22H7Z" fill="#185abd" /><path d="M7 22H29V28.500H7Z" fill="#103f91" />
      <rect x="0.500" y="7" width="15.500" height="15.500" rx="1.200" fill="#185abd" />
      <path d="M3.500 11L5.700 19L8.200 11.500L10.700 19L13 11" stroke="#fff" strokeWidth="1.700" />
    </Icon>) },
  { id: "excel", state: "active", art: <ExcelLogo w={30} /> },
  { id: "media", state: "open", art: (
    <Icon w={30}>
      <defs><linearGradient id="mp" x1="0" y1="0" x2="1" y2="1"><stop stopColor="#ff8a2a" /><stop offset="0.5" stopColor="#e07a8a" /><stop offset="1" stopColor="#8a55d8" /></linearGradient></defs>
      <circle cx="15" cy="15" r="13.700" fill="#3b3b40" stroke="url(#mp)" strokeWidth="2.400" />
      <path d="M11 8.500L21.500 15L11 21.500Z" fill="#fff" />
    </Icon>) },
  { id: "snip", state: "open", art: (
    <Icon w={30}>
      <rect x="0" y="0" width="22" height="22" rx="2" fill="#f2f2f2" />
      <path d="M4.500 19V4.500H18" stroke="#d83b01" strokeWidth="3" strokeDasharray="3 1.800" />
      <path d="M18 5V21 M5 19H22" stroke="#b8b8bc" strokeWidth="2.600" />
      <circle cx="16" cy="26.500" r="2.600" stroke="#1e9be0" strokeWidth="1.800" /><circle cx="27" cy="16" r="2.600" stroke="#1e9be0" strokeWidth="1.800" />
      <path d="M16 24L19 18 M24.500 17L18 20" stroke="#1e9be0" strokeWidth="1.800" />
    </Icon>) },
];

const tabs = [
  ["File", 24, 33], ["Home", 46], ["Insert", 43], ["Page Layout", 93], ["Formulas", 69], ["Data", 36, 24],
  ["Review", 52, 25], ["View", 36], ["Developer", 77], ["Help", 34, 25], ["Chart Design", 99, 23, true, true], ["Format", 54, 725, true],
];

function ToolButton({ icon, lines, w, ml, dx, top = 10 }) {
  return (
    <Tool $w={w} $ml={ml} $top={top}>
      <ToolIcon $dx={dx} $top={top}>{icon}</ToolIcon>
      {lines.map(([t, tw, arrow]) => (
        <ToolLine key={t}>
          <Text $size={14.2} w={tw}>{t}</Text>
          {arrow && <Chevron w={8} h={5} ml={5} />}
        </ToolLine>
      ))}
    </Tool>
  );
}

const narrow = 'Roboto, "Open Sans", sans-serif';

export default function App() {
  return (
    <Screen>
      <Global />
      <Defs>
        <defs>
          <radialGradient id="silver" cx="0.4" cy="0.4" r="0.8"><stop stopColor="#e6e6e6" /><stop offset="1" stopColor="#b4b4b4" /></radialGradient>
          <radialGradient id="dark" cx="0.5" cy="0.4" r="0.7"><stop stopColor="#5a5a5a" /><stop offset="1" stopColor="#333" /></radialGradient>
          <pattern id="hatch" width="5" height="5" patternUnits="userSpaceOnUse" patternTransform="rotate(-45)">
            <rect width="5" height="5" fill="#fff" /><rect width="2" height="5" fill="#e4e4e4" />
          </pattern>
        </defs>
      </Defs>

      <TitleBar>
        <TitlePart $w={740} $pl={20}>
          <ExcelLogo w={20} />
          <Text $ml={30} $size={14} w={111}>Sales Dataset (1)</Text>
          <Chevron w={13} h={7} ml={5} />
        </TitlePart>
        <SearchField>
          <Icon w={18} h={18}>
            <circle cx="11.500" cy="6.500" r="5.700" stroke="#616161" strokeWidth="1.300" />
            <path d="M7.500 10.500L0.500 17.500" stroke="#616161" strokeWidth="1.300" />
          </Icon>
          <Text $ml={17} $size={16} $color="#616161" w={51}>Search</Text>
        </SearchField>
        <TitlePart $w={720} $pl={222}>
          <Text $size={13} w={204}>Jolly Mogbejuloritshe Madamedon</Text>
          <Avatar><Text $size={11.5} $color="#fff">JM</Text></Avatar>
          <Icon w={16} h={15} ml={36}>
            <path d="M4 0.600H12L15.400 5L8 14.400L0.600 5Z M0.600 5H15.400 M5.500 5L8 14.400L10.500 5 M5.500 5L8 0.600L10.500 5" stroke="#242424" strokeWidth="1" />
          </Icon>
          <Icon w={13} h={12} ml={45}><path d="M0 6H13" stroke="#242424" strokeWidth="1.300" /></Icon>
          <Icon w={13} h={13} ml={47}>
            <rect x="0.600" y="2.800" width="9.600" height="9.600" rx="1.800" stroke="#242424" strokeWidth="1.200" />
            <path d="M3 0.600H10Q12.400 0.600 12.400 3V9.500" stroke="#242424" strokeWidth="1.200" />
          </Icon>
          <Cross w={13} ml={47} />
        </TitlePart>
      </TitleBar>

      <TabStrip>
        {tabs.map(([t, w, mr, green, active]) => (
          <RibbonTab key={t} $mr={mr} $green={green} $active={active}>
            <Text $size={16} $weight={active ? 600 : 400} w={w}>{t}</Text>
          </RibbonTab>
        ))}
        <TabButton $w={117} $ml={0}>
          <Icon w={14} h={14}><path d="M0.600 1H13.400V10H7L3.500 13.200V10H0.600Z" stroke="#242424" strokeWidth="1.200" /></Icon>
          <Text $ml={6} $size={16} w={84}>Comments</Text>
        </TabButton>
        <TabButton $w={89} $ml={10} $primary>
          <Icon w={14} h={14}>
            <path d="M5 4H0.600V13.400H12V9" stroke="#fff" strokeWidth="1.200" />
            <path d="M9 0.800L13.400 4.500L9 8.200V6Q5 6 3.500 9.500Q4 4 9 3.300Z" stroke="#fff" strokeWidth="1.100" />
          </Icon>
          <Text $ml={6} $size={16} w={43}>Share</Text>
          <Chevron w={8} h={5} ml={8} c="#fff" />
        </TabButton>
      </TabStrip>

      <RibbonCard>
        <Ribbon>
          <Group $w={162}>
            <GroupTools>
              <ToolButton w={90} ml={6} dx={2} icon={<AddElementIcon />} lines={[["Add Chart", 67], ["Element", 53, 1]]} />
              <ToolButton w={62} ml={-6} dx={1} icon={<QuickLayoutIcon />} lines={[["Quick", 38], ["Layout", 44, 1]]} />
            </GroupTools>
            <GroupCaption $shift={6}><Text $size={12.6} w={79}>Chart Layouts</Text></GroupCaption>
          </Group>
          <Divider />
          <Group $w={989}>
            <GroupTools>
              <ToolButton w={62} ml={9} dx={0} icon={<PaletteIcon />} lines={[["Change", 50], ["Colors", 42, 1]]} />
              <Gallery>
                <Styles>
                  {thumbs.map((art, i) => (
                    <StyleCell key={i} $selected={i === 0}><Thumb viewBox="0 0 90 60" fill="none">{art}</Thumb></StyleCell>
                  ))}
                </Styles>
                <GallerySteps>
                  <Step $dim $r="0 5px 0 0"><Chevron w={8} h={5} dir="up" c="#a8a8a8" /></Step>
                  <Step><Chevron w={8} h={5} /></Step>
                  <Step $r="0 0 5px 0">
                    <Icon w={9} h={8}><path d="M0 0.700H9 M1 3.500L4.500 7L8 3.500" stroke="#333" strokeWidth="1.300" /></Icon>
                  </Step>
                </GallerySteps>
              </Gallery>
            </GroupTools>
            <GroupCaption><Text $size={12.6} w={68}>Chart Styles</Text></GroupCaption>
          </Group>
          <Divider />
          <Group $w={160}>
            <GroupTools>
              <ToolButton w={84} ml={11} top={7} dx={-1} icon={<SwitchIcon />} lines={[["Switch Row/", 82], ["Column", 51]]} />
              <ToolButton w={52} ml={4} dx={1} icon={<SelectDataIcon />} lines={[["Select", 40], ["Data", 31]]} />
            </GroupTools>
            <GroupCaption $shift={-2}><Text $size={12.6} w={27}>Data</Text></GroupCaption>
          </Group>
          <Divider />
          <Group $w={94}>
            <GroupTools>
              <ToolButton w={94} icon={<Bars />} lines={[["Change", 50], ["Chart Type", 70]]} />
            </GroupTools>
            <GroupCaption $shift={-2}><Text $size={12.6} w={27}>Type</Text></GroupCaption>
          </Group>
          <Divider />
          <Group $w={71}>
            <GroupTools>
              <ToolButton w={71} dx={2} icon={<MoveChartIcon />} lines={[["Move", 37], ["Chart", 35]]} />
            </GroupTools>
            <GroupCaption><Text $size={12.6} w={49}>Location</Text></GroupCaption>
          </Group>
          <Divider />
          <Collapse><Chevron w={14} h={7} /></Collapse>
        </Ribbon>

        <QuickAccess>
          <Icon w={20} h={20}>
            <path d="M1 1H19V19H1Z" fill="#d78fdc" stroke="#9332a8" strokeWidth="1.800" />
            <rect x="5" y="1" width="10" height="7" fill="#fafafa" stroke="#9332a8" strokeWidth="1.400" />
            <rect x="5" y="12.500" width="10" height="6.500" fill="#fafafa" stroke="#9332a8" strokeWidth="1.400" /><path d="M8 14V19" stroke="#9332a8" strokeWidth="1.800" />
          </Icon>
          <Text $ml={5} $size={12.8} w={27}>Save</Text>
          <Icon w={18} h={20} ml={22}>
            <path d="M1 0.500V8H8.500 M1.500 7.500Q5.500 1 11 1Q17.300 1.500 17.300 7Q17 10 13.500 13L7 19.500" stroke="#444" strokeWidth="1.400" />
          </Icon>
          <Text $ml={6} $size={12.8} w={32}>Undo</Text>
          <Chevron w={8} h={5} ml={13} />
          <Icon w={18} h={20} ml={14}>
            <path d="M17 0.500V8H9.500 M16.500 7.500Q12.500 1 7 1Q0.700 1.500 0.700 7Q1 10 4.500 13L11 19.500" stroke="#b5b5b5" strokeWidth="1.400" />
          </Icon>
          <Text $ml={6} $size={12.8} $color="#b8b8b8" w={31}>Redo</Text>
          <Chevron w={8} h={5} ml={13} c="#b8b8b8" />
          <Text $ml={14} $size={12.8} w={54}>AutoSave</Text>
          <Toggle><Text $ml={6} $size={12.8} $color="#616161" w={18}>Off</Text></Toggle>
          <Icon w={20} h={20} ml={16}>
            <path d="M4.500 13.500L10 0.500L15.500 13.500 M6.500 9H13.500" stroke="#444" strokeWidth="1.500" />
            <rect y="15.500" width="20" height="4.500" fill="#242424" />
          </Icon>
          <Text $ml={5} $size={12.8} w={26}>Font</Text>
          <Icon w={9} h={8} ml={26}><path d="M0 0.700H9 M1 3.500L4.500 7L8 3.500" stroke="#333" strokeWidth="1.300" /></Icon>
        </QuickAccess>

        <MessageBar>
          <Icon w={20} h={20}>
            <circle cx="10" cy="10" r="9.300" stroke="#1a86d0" strokeWidth="1.300" fill="#f6fbff" />
            <path d="M10 8.500V15.500" stroke="#1a86d0" strokeWidth="1.900" /><circle cx="10" cy="5.800" r="1.200" fill="#1a86d0" />
          </Icon>
          <Text $ml={10} $size={14.2} $weight={600} w={279}>MAKE THAT LAST MINUTE ADJUSTMENT</Text>
          <Text $ml={12} $size={14.2} w={380}>Continue your work anywhere with the Office Mobile App</Text>
          <MessageButton><Text $size={14.2} w={74}>Get started</Text></MessageButton>
          <Push />
          <Cross w={11} />
        </MessageBar>
      </RibbonCard>

      <FormulaRow>
        <InputBox $w={127}>
          <Text $font={narrow} $size={16} w={62}>Chart 22</Text>
          <Push />
          <Chevron w={13} h={8} />
        </InputBox>
        <Dots $ml={11} $mt={9} />
        <InputBox $w={92} $ml={11} $pad="0 7px">
          <Cross w={15} c="#bdbdbd" />
          <Icon w={20} h={14} ml={13}><path d="M0.500 8L6 13L19.500 0.500" stroke="#bdbdbd" strokeWidth="1.300" /></Icon>
          <Fx>fx</Fx>
        </InputBox>
        <InputBox $w={1651} $h={78} $ml={5} $pad="5px 4px 0 12px">
          <Text $font={narrow} $size={16} w={382}>=SERIES(,Analysis!$D$6:$D$7,Analysis!$E$6:$E$7,1)</Text>
          <Push />
          <Icon w={13} h={14}><path d="M0.500 10L6.500 4L12.500 10" stroke="#333" strokeWidth="1.300" /></Icon>
        </InputBox>
      </FormulaRow>

      <Main>
        <Workbook>
          <SheetRow>
            <Sheet>
              <Shape $x={15} $y={5} $w={172} $h={528} $r={30} />
              <Shape $x={195} $y={8} $w={1400} $h={100} $r={18} />
              <Shape $x={195} $y={112} $w={510} $h={120} $r={20} />
              <Shape $x={709} $y={113} $w={585} $h={117} $r={17} />
              <Shape $x={1304} $y={116} $w={400} $h={116} $r={18} />
              <Hatched $x={207} $y={27}><Text $font={narrow} $size={63} $weight={700} w={703}>Databel Dashboard Store</Text></Hatched>
              <Hatched $x={206} $y={120}><Text $font={narrow} $size={25} $weight={700} w={62}>Sales</Text></Hatched>
              <Hatched $x={732} $y={122}><Text $font={narrow} $size={25} $weight={700} w={62}>Profit</Text></Hatched>
              <Hatched $x={1313} $y={124}><Text $font={narrow} $size={25} $weight={700} w={125}>Customers</Text></Hatched>
              <Amount $x={202} $y={159}><Text $font={narrow} $size={45} w={254}>£891,111.00</Text></Amount>
              <Amount $x={730} $y={159}><Text $font={narrow} $size={45} w={254}>£754,940.70</Text></Amount>
              <Amount $x={1310} $y={161}><Text $font={narrow} $size={42} w={139}>9,360.0</Text></Amount>

              <ChartObject viewBox="500 100 200 150" fill="none">
                <rect x="514.500" y="115" width="165" height="116" stroke="#7a7a7a" strokeWidth="1.200" />
                <circle cx="593.500" cy="173" r="50" stroke="#7c7f78" strokeWidth="16.500" />
                <circle cx="593.500" cy="173" r="50" stroke="#0f9b77" strokeWidth="14" />
                <path d="M549 136.500A57.500 57.500 0 0 1 593.500 115.500V130A43 43 0 0 0 560 146Z" fill="#3a7022" stroke="#7c7f78" />
                {[[548, 136.5], [558.5, 145.5]].map(([x, y]) => <circle key={x} cx={x} cy={y} r="3.600" fill="#cfe6fb" stroke="#0f7ad0" strokeWidth="1.400" />)}
                {[[515, 115], [515, 173], [515, 231], [679.5, 173]].map(([x, y]) => <circle key={`${x}-${y}`} cx={x} cy={y} r="5.700" fill="#fff" stroke="#666" strokeWidth="2.200" />)}
              </ChartObject>
              <StyleFlyout>
                <Icon w={22} h={22}>
                  <path d="M21 1L12 12L9 10L18 0Z" fill="#fff" stroke="#444" strokeWidth="1.300" />
                  <path d="M8.500 10.500L12 14Q11 20 1 18Q5 17 5 13.500Q6 11 8.500 10.500Z" fill="#6ab0e8" stroke="#0f6cbd" strokeWidth="1.300" />
                </Icon>
              </StyleFlyout>

              <MiniToolbar>
                <MiniTool $w={51}>
                  <MiniTop>
                    <Icon w={30} h={30}>
                      <path d="M4.500 11L14 3L21 12L13 20Z" fill="#fff" stroke="#444" strokeWidth="1.400" />
                      <path d="M12.500 9V2Q14 -0.500 15.500 2V9" fill="#fff" stroke="#444" strokeWidth="1.300" />
                      <path d="M18 6Q25 4 24.500 18Q22.500 10 18 8Z" fill="#1f7ac8" />
                      <rect y="22.500" width="30" height="7.500" fill="#3a7022" />
                    </Icon>
                    <Icon w={8} h={20} ml={2}><path d="M0.500 13.500L4 17L7.500 13.500" stroke="#333" strokeWidth="1.300" /></Icon>
                  </MiniTop>
                  <MiniLabel $pl={6}><Text $size={12.6} w={15}>Fill</Text></MiniLabel>
                </MiniTool>
                <MiniTool $w={42}>
                  <MiniTop>
                    <Icon w={30} h={30}>
                      <path d="M24 2.500H2V20.500H9" stroke="#555" strokeWidth="1.400" />
                      <path d="M11 20L13 13L24.500 1.500Q27 1 28.500 4L17 17Z" fill="#fff" stroke="#1f84d4" strokeWidth="1.500" />
                      <rect x="0.700" y="23.200" width="28.600" height="6" fill="#fff" stroke="#9a9a9a" />
                    </Icon>
                    <Icon w={8} h={20} ml={2}><path d="M0.500 13.500L4 17L7.500 13.500" stroke="#333" strokeWidth="1.300" /></Icon>
                  </MiniTop>
                  <MiniLabel><Text $ml={-7} $size={12.6} w={41}>Outline</Text></MiniLabel>
                </MiniTool>
                <SeriesSelect>
                  <Text $size={12.8} w={46}>Series 1</Text>
                  <Chevron w={8} h={5} />
                </SeriesSelect>
              </MiniToolbar>

              <ContextMenu>
                <MenuItem><MenuIcon /><Text $size={14.2} w={44}><u>D</u>elete</Text></MenuItem>
                <MenuItem>
                  <MenuIcon>
                    <Icon w={18} h={20}>
                      <path d="M8 1H17V19H3V11" stroke="#555" strokeWidth="1.500" />
                      <path d="M11 7H14 M11 13H14 M7 14V13 M7 10V9" stroke="#777" strokeWidth="1.500" />
                      <path d="M4.500 0.500L1 4L4.500 8 M1 4Q8 3.500 8 11" stroke="#1f84d4" strokeWidth="1.500" />
                    </Icon>
                  </MenuIcon>
                  <Text $size={14.2} w={135}>Reset to M<u>a</u>tch Style</Text>
                </MenuItem>
                <MenuRule />
                <MenuItem>
                  <MenuIcon><Svg $w={20} $h={20} viewBox="0 0 34 36" preserveAspectRatio="none">
                    <rect x="1" y="15" width="10" height="20" fill="#c8c6c4" stroke="#797774" strokeWidth="2.200" />
                    <rect x="22" y="7" width="10" height="28" fill="#83beec" stroke="#0063b1" strokeWidth="2.200" />
                    <rect x="11.500" y="1" width="10" height="34" fill="#fafafa" stroke="#3a3a3a" strokeWidth="2.200" />
                  </Svg></MenuIcon>
                  <Text $size={14.2} w={177}>Change Series Chart T<u>y</u>pe...</Text>
                </MenuItem>
                <MenuItem>
                  <MenuIcon>
                    <Icon w={20} h={20}>
                      <rect x="0.700" y="1" width="18.600" height="16" fill="#fff" stroke="#555" strokeWidth="1.300" />
                      <rect x="0.700" y="1" width="12.500" height="10.500" fill="#83beec" stroke="#0063b1" strokeWidth="1.400" />
                      <path d="M0.700 6H13 M7 1V17 M13 1V8" stroke="#0063b1" strokeWidth="1.300" />
                      <rect x="11.500" y="12" width="4" height="7" fill="#83beec" stroke="#0063b1" strokeWidth="1.200" />
                      <rect x="15.500" y="7.500" width="4" height="11.500" fill="#fff" stroke="#444" strokeWidth="1.200" />
                    </Icon>
                  </MenuIcon>
                  <Text $size={14.2} w={85}>S<u>e</u>lect Data...</Text>
                </MenuItem>
                <MenuItem $dim>
                  <MenuIcon>
                    <Icon w={18} h={20}><path d="M1.500 1.500L12 3.500L13 19L1.500 16Z M1.500 1.500L5 0.700L17 2.500V17.500L13 19 M12 3.500L17 2.500" fill="#eee" stroke="#8c8c8c" strokeWidth="1.400" /></Icon>
                  </MenuIcon>
                  <Text $size={14.2} w={95}>3-D <u>R</u>otation...</Text>
                </MenuItem>
                <MenuRule />
                <MenuItem $pr={12}>
                  <MenuIcon />
                  <Text $size={14.2} w={110}>Add Data La<u>b</u>els</Text>
                  <SubDivider />
                  <Chevron w={7} h={12} dir="right" ml={10} />
                </MenuItem>
                <MenuItem $dim><MenuIcon /><Text $size={14.2} w={103}>Add T<u>r</u>endline...</Text></MenuItem>
                <MenuItem>
                  <MenuIcon><BucketBrush w={20} /></MenuIcon>
                  <Text $size={14.2} w={135}><u>F</u>ormat Data Series...</Text>
                </MenuItem>
              </ContextMenu>
            </Sheet>
            <VScroll>
              <Icon w={12} h={9}><path d="M6 0L12 8Q12 9 11 9H1Q0 9 0 8Z" fill="#707070" /></Icon>
              <VThumb />
              <Icon w={12} h={9}><path d="M6 9L12 1Q12 0 11 0H1Q0 0 0 1Z" fill="#707070" /></Icon>
            </VScroll>
          </SheetRow>

          <SheetTabs>
            <NavCell $w={73} $pl={32}><Chevron w={7} h={13} dir="left" c="#9a9a9a" /></NavCell>
            <NavCell $w={63}><Chevron w={7} h={13} dir="right" c="#9a9a9a" /></NavCell>
            <SheetTab $w={90}><Text $size={16.4} w={59}>Dataset</Text></SheetTab>
            <TabDivider />
            <SheetTab $w={94}><Text $size={16.4} w={62}>Analysis</Text></SheetTab>
            <TabDivider />
            <SheetTab $w={108} $ml={4} $active><Text $size={16} $weight={600} w={87}>Dashboard</Text></SheetTab>
            <TabDivider $ml={5} />
            <NavCell $w={472} $pl={52}><Icon w={15}><path d="M7.500 0V15 M0 7.500H15" stroke="#333" strokeWidth="1.400" /></Icon></NavCell>
            <Dots $ml={0} $mt={13} />
            <HScroll>
              <Icon w={9} h={12}><path d="M0 6L8 0Q9 0 9 1V11Q9 12 8 12Z" fill="#707070" /></Icon>
              <HThumb />
              <Icon w={9} h={12}><path d="M9 6L1 0Q0 0 0 1V11Q0 12 1 12Z" fill="#707070" /></Icon>
            </HScroll>
          </SheetTabs>
        </Workbook>

        <Pane>
          <PaneTitle>
            <Text $size={26} $weight={300} w={221}>Format Data Series</Text>
            <Chevron w={18} h={9} ml={42} />
            <Cross w={13} ml={26} />
          </PaneTitle>
          <PaneHeading>
            <Text $size={13.8} $weight={700} w={100}>Series Options</Text>
            <Chevron w={13} h={7} ml={9} c="#1a86d0" s={1.6} />
          </PaneHeading>
          <PaneIcons>
            <Icon w={27} h={34}>
              <path d="M1 14L12 4L21 15L11 25Z" fill="#fff" stroke="#707070" strokeWidth="1.300" />
              <path d="M8 8V3Q8 1 10 1Q12 1 12 3V10" stroke="#707070" strokeWidth="1.200" /><circle cx="12" cy="11" r="1.600" fill="#707070" />
              <path d="M17 7Q27 7 26 16L22 25Q22 17 17 11Z" fill="#707070" />
            </Icon>
            <PaneTab>
              <Icon w={24} h={28}>
                <path d="M12 1L23.300 9.500L19 22H5L0.700 9.500Z" fill="#e2ebdf" stroke="#5a9a50" strokeWidth="1.200" />
                <path d="M4.500 22.500H19.500" stroke="#3a7a2a" strokeWidth="1.800" /><path d="M5 24L3 28 M19 24L21 28" stroke="#b7d3b1" />
              </Icon>
            </PaneTab>
            <Icon w={27} h={34}><path d="M0 7H8V26H0Z M9 0H17V26H9Z M18 4H26V26H18Z" fill="#6e6e6e" /></Icon>
          </PaneIcons>
          <Icon w={327} h={20} ml={14}><path d="M0 17.500H61L70 7.500L78 17.500H326" stroke="#cbcbcb" strokeWidth="1" /></Icon>
          {[["Shadow", 55], ["Glow", 36], ["Soft Edges", 74], ["3-D Format", 81]].map(([t, w]) => (
            <PaneRow key={t}>
              <Chevron w={7} h={11} dir="right" s={1.7} />
              <Text $ml={9} $size={14} $weight={700} w={w}>{t}</Text>
            </PaneRow>
          ))}
        </Pane>
        <PaneStrip>
          <Icon w={18} h={22}>
            <rect x="1" y="1" width="15.500" height="20" stroke="#a9a9a9" strokeWidth="1.500" />
            <path d="M4 6H6 M7 6H13 M4 9H6 M7 9H13 M2 14H16 M2 17.500H16 M9 14V21" stroke="#b5b5b5" strokeWidth="1.300" />
          </Icon>
          <StripActive><BucketBrush w={24} /></StripActive>
        </PaneStrip>
      </Main>

      <StatusBar>
        <Text $size={12.6} w={36}>Ready</Text>
        <Icon w={19} h={17} ml={24}>
          <path d="M18 7V1H0.800V14.500H6 M0.800 4.500H18 M3.500 7.500H6 M3.500 10.500H5.500" stroke="#444" strokeWidth="1.400" />
          <circle cx="12.500" cy="11.500" r="5" stroke="#444" strokeWidth="1.400" /><circle cx="12.500" cy="11.500" r="2.200" fill="#444" />
        </Icon>
        <Icon w={18} h={18} ml={21}>
          <circle cx="8" cy="2.500" r="2" stroke="#333" strokeWidth="1.200" />
          <path d="M1 3.500Q0.500 5.500 2 6L5 7.500V11L3 16.500Q4 18 5 17L8 11.500 M15 3.500Q15.500 5.500 14 6L11 7.500V9 M1 3.500L6 5.500H10L15 3.500 M9.500 10L17 17.500 M17 10L9.500 17.500" stroke="#333" strokeWidth="1.200" />
        </Icon>
        <Text $ml={4} $size={12.4} $weight={700} w={152}>Accessibility: Investigate</Text>
        <Push />
        <ViewButton $active><Icon w={17} h={17}><path d="M0.700 0.700H16.300V16.300H0.700Z M0.700 6H16.300 M0.700 11H16.300 M6 0.700V16.300 M11 0.700V16.300" stroke="#444" strokeWidth="1.300" /></Icon></ViewButton>
        <ViewButton><Icon w={18} h={17}><path d="M0.800 0.800H17.200V16.200H0.800Z M4 3.500H14V13.500H4Z M6 6H12 M6 8.500H12 M6 11H12" stroke="#444" strokeWidth="1.300" /></Icon></ViewButton>
        <ViewButton><Icon w={18} h={17}><path d="M0.800 0.800H17.200V16.200H0.800Z M0.800 10.500H11.500V0.800 M6 0.800V10.500" stroke="#444" strokeWidth="1.300" /></Icon></ViewButton>
        <Icon w={158} h={16} ml={7}>
          <path d="M0 7H10 M147 7H157 M152 2V12" stroke="#333" strokeWidth="1.200" />
          <path d="M16 8H141 M78.500 4V12" stroke="#666" strokeWidth="1.100" />
          <rect x="55" y="1" width="6" height="14" fill="#616161" />
        </Icon>
        <Text $ml={15} $size={12.2} w={25}>68%</Text>
      </StatusBar>

      <Taskbar>
        <Weather><WeatherBadge><Text $size={11.5}>21°</Text></WeatherBadge></Weather>
        <Apps>
          {apps.map((a) => (
            <AppSlot key={a.id} $state={a.state}>
              {a.art}
              {a.badge && <CountBadge $c="#4cc2ff"><Text $size={12}>{a.badge}</Text></CountBadge>}
              {a.dot && <CountBadge $c="#ffb90d" />}
            </AppSlot>
          ))}
        </Apps>
        <Tray>
          <Icon w={15} h={9}><path d="M1 8L7.500 1.500L14 8" stroke="#fff" strokeWidth="1.900" /></Icon>
          <Icon w={21} h={18} ml={22}>
            <path d="M5 15Q0.500 15 0.500 11Q0.500 7.500 4.500 7Q6 2 10.500 2Q15.500 2 16.500 7Q20.500 7.500 20.500 11Q20.500 15 16 15Z" fill="#77777f" />
            <path d="M3 1.500L19 17" stroke="#222230" strokeWidth="3" /><path d="M3 1.500L19 17" stroke="#e8e8e8" strokeWidth="1.300" />
          </Icon>
          <Icon w={21} h={21} ml={19}>
            <path d="M1 12Q0 3 9 1Q15 0.500 18 5V1 M18.500 6H14 M3 18V14H7 M3 14.500Q6 19 10 19.500" stroke="#fff" strokeWidth="1.400" />
            <circle cx="15.500" cy="15.500" r="5" fill="#ff9a0f" />
          </Icon>
          <Icon w={20} h={16} ml={19}>
            <path d="M1 5.500Q10 -3 19 5.500 M4 8.500Q10 3 16 8.500 M6.800 11.300Q10 8.500 13.200 11.300" stroke="#fff" strokeWidth="1.500" />
            <circle cx="10" cy="13.500" r="1.700" fill="#fff" />
          </Icon>
          <Icon w={20} h={17} ml={10}>
            <path d="M1 6H4L8.500 1.500V15.500L4 11H1Z M11 5.500Q13 8.500 11 11.500 M13.500 3Q17.500 8.500 13.500 14 M16 1Q22 8.500 16 16" stroke="#fff" strokeWidth="1.300" />
          </Icon>
          <Icon w={20} h={16} ml={10}>
            <path d="M7 2.500H15Q17 2.500 17 4.500V12Q17 14 15 14H3.500Q2 14 2 12V9.500 M18 6.500H19.500V10.500H18" stroke="#fff" strokeWidth="1.500" />
            <path d="M8 5.500H14.500V11.500H4.500V10Z" fill="#fff" /><path d="M4 -1L0 5.500H3L2 10L7 3.500H4L6 -1Z" fill="#fff" />
          </Icon>
          <Clock>
            <Text $size={14.2} w={36}>12:55</Text>
            <Text $size={14.2} w={77}>29/06/2024</Text>
          </Clock>
          <Icon w={17} h={20} ml={11}>
            <path d="M8.500 1Q14 1 14.500 7V12L16.500 15.500H0.500L2.500 12V7Q3 1 8.500 1Z" fill="#99ebff" /><path d="M5.500 16.500Q8.500 21 11.500 16.500Z" fill="#99ebff" />
          </Icon>
          <Icon w={30} h={30} ml={22}>
            <defs>
              <linearGradient id="c1" x1="0" y1="0" x2="0.300" y2="1"><stop stopColor="#1a74e8" /><stop offset="0.5" stopColor="#20b8b0" /><stop offset="1" stopColor="#f0d020" /></linearGradient>
              <linearGradient id="c2" x1="0.300" y1="0" x2="0.500" y2="1"><stop stopColor="#a07cf8" /><stop offset="0.5" stopColor="#e060b0" /><stop offset="1" stopColor="#ff8a3a" /></linearGradient>
            </defs>
            <path d="M8 2Q9 1 12 1H19Q22 1 22.500 5L18 8Q15 9 14 13L11 22H4Q0 21 1.500 15Q4 5 8 2Z" fill="url(#c1)" />
            <path d="M17 9H24Q29 9 28 15Q26 25 22 28H12Q16 26 17 20Z" fill="url(#c2)" />
            <rect x="7" y="19.500" width="22.500" height="10" rx="3" fill="#ffc400" />
            <text x="18.300" y="27.600" fontSize="8.500" fontWeight="700" fontFamily="Open Sans" fill="#222" textAnchor="middle">PRE</text>
          </Icon>
        </Tray>
      </Taskbar>
    </Screen>
  );
}
